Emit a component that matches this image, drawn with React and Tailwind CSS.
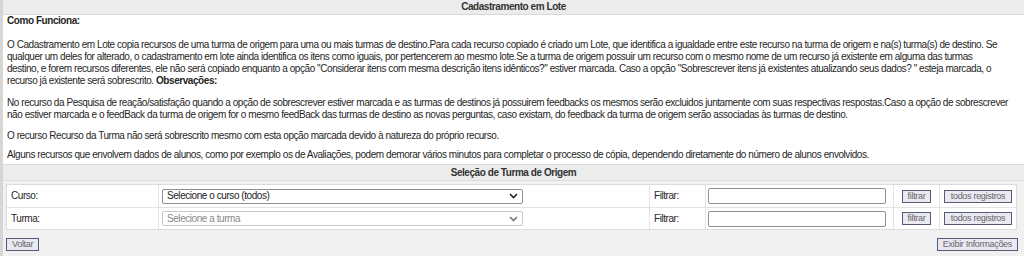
import React from 'react';

const SelectBox = ({ text, muted }) => (
    <div className={`flex items-center justify-between h-[15px] border rounded-[2px] pl-[4px] pr-[4px] bg-white ${muted ? 'border-[#c8c8c8] text-[#888]' : 'border-[#8f8f8f] text-[#222]'}`}>
        <span>{text}</span>
        <svg width="9" height="6" viewBox="0 0 9 6" className={muted ? 'text-[#777]' : 'text-[#222]'}>
            <path d="M1 1 L4.5 4.5 L8 1" fill="none" stroke="currentColor" strokeWidth="1.6" />
        </svg>
    </div>
);

const SmallButton = ({ children, className = '' }) => (
    <button className={`h-[13px] px-[5px] border border-[#555a77] bg-[#e9e9f2] text-[#666] text-[9px] leading-[11px] tracking-[-0.3px] ${className}`}>
        {children}
    </button>
);

const FilterRow = ({ label, select, muted }) => (
    <div className="flex h-[22px] items-center border-t border-[#e3e3e3] first:border-t-0">
        <div className="w-[151px] pl-[4px]">{label}</div>
        <div className="w-[491px] pl-[3px] border-l border-[#e3e3e3] h-full flex items-center">
            <div className="w-[361px]">
                <SelectBox text={select} muted={muted} />
            </div>
        </div>
        <div className="w-[56px] pl-[4px] border-l border-[#e3e3e3] h-full flex items-center">Filtrar:</div>
        <div className="w-[188px] pl-[2px] border-l border-[#e3e3e3] h-full flex items-center">
            <div className="w-[178px] h-[16px] border border-[#8f8f8f] rounded-[2px] bg-white"></div>
        </div>
        <div className="w-[46px] border-l border-[#e3e3e3] h-full flex items-center justify-center">
            <SmallButton>filtrar</SmallButton>
        </div>
        <div className="flex-1 border-l border-[#e3e3e3] h-full flex items-center justify-center">
            <SmallButton className="px-[6px]">todos registros</SmallButton>
        </div>
    </div>
);

const Lines = ({ lines, className = '' }) => (
    <div className={className}>
        {lines.map((l, i) => (
            <div key={i} className="whitespace-nowrap">{l}</div>
        ))}
    </div>
);

const App = () => {
    return (
        <div className="w-[1024px] h-[256px] overflow-hidden bg-[#f1f1f1] border-l-[3px] border-[#d6d6d6] text-[10px] tracking-[-0.44px] leading-[12px] text-[#262626]" style={{ fontFamily: '"Liberation Sans", Arial, sans-serif' }}>
            {/* Cabeçalho */}
            <div className="h-[15px] bg-[#ececec] border-b border-[#d8d8d8] text-center font-bold leading-[13px] text-[#333]">
                Cadastramento em Lote
            </div>

            {/* Como Funciona */}
            <div className="bg-white pl-[4px] pr-[6px] h-[149px]">
                <div className="font-bold mb-[12px]">Como Funciona:</div>
                <Lines
                    className="mb-[10px]"
                    lines={[
                        'O Cadastramento em Lote copia recursos de uma turma de origem para uma ou mais turmas de destino.Para cada recurso copiado é criado um Lote, que identifica a igualdade entre este recurso na turma de origem e na(s) turma(s) de destino. Se',
                        'qualquer um deles for alterado, o cadastramento em lote ainda identifica os itens como iguais, por pertencerem ao mesmo lote.Se a turma de origem possuir um recurso com o mesmo nome de um recurso já existente em alguma das turmas',
                        'destino, e forem recursos diferentes, ele não será copiado enquanto a opção "Considerar itens com mesma descrição itens idênticos?" estiver marcada. Caso a opção "Sobrescrever itens já existentes atualizando seus dados? " esteja marcada, o',
                        <>recurso já existente será sobrescrito. <b>Observações:</b></>,
                    ]}
                />
                <Lines
                    className="mb-[9px]"
                    lines={[
                        'No recurso da Pesquisa de reação/satisfação quando a opção de sobrescrever estiver marcada e as turmas de destinos já possuirem feedbacks os mesmos serão excluidos juntamente com suas respectivas respostas.Caso a opção de sobrescrever',
                        'não estiver marcada e o feedBack da turma de origem for o mesmo feedBack das turmas de destino as novas perguntas, caso existam, do feedback da turma de origem serão associadas às turmas de destino.',
                    ]}
                />
                <Lines
                    className="mb-[7px]"
                    lines={['O recurso Recurso da Turma não será sobrescrito mesmo com esta opção marcada devido à natureza do próprio recurso.']}
                />
                <Lines
                    lines={['Alguns recursos que envolvem dados de alunos, como por exemplo os de Avaliações, podem demorar vários minutos para completar o processo de cópia, dependendo diretamente do número de alunos envolvidos.']}
                />
            </div>

            {/* Seleção de Turma de Origem */}
            <div className="h-[17px] bg-[#ececec] border-t border-b border-[#dcdcdc] text-center font-bold leading-[15px] text-[#333]">
                Seleção de Turma de Origem
            </div>

            <div className="pl-[3px] pr-[7px] pt-[3px] pb-[3px]">
                <div className="bg-white border border-[#dcdcdc]">
                    <FilterRow label="Curso:" select="Selecione o curso (todos)" />
                    <FilterRow label="Turma:" select="Selecione a turma" muted />
                </div>
            </div>

            <div className="flex items-center justify-between pl-[3px] pr-[6px] pt-[5px]">
                <SmallButton className="px-[4px]">Voltar</SmallButton>
                <SmallButton className="px-[4px]">Exibir Informações</SmallButton>
            </div>
        </div>
    );
};

export default App;
